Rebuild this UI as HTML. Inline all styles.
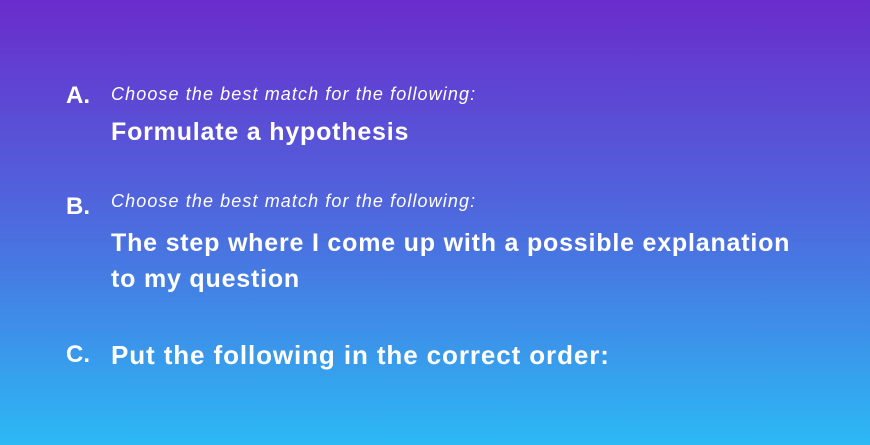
<!DOCTYPE html>
<html><head><style>
html,body{margin:0;padding:0}
body{width:870px;height:445px;overflow:hidden;background:linear-gradient(180deg,#6a2ccc 0%,#4d6ade 50%,#2cb9f4 100%);font-family:"Liberation Sans",sans-serif;color:#fff;position:relative}
.t{position:absolute;white-space:nowrap}
.L{font-weight:bold;font-size:24px}
.i{font-style:italic;font-size:18px;letter-spacing:1.1px}
.b{font-weight:bold;font-size:25px;letter-spacing:0.8px}
</style></head><body>
<div class="t L" style="left:66px;top:82px">A.</div>
<div class="t i" style="left:111px;top:84px">Choose the best match for the following:</div>
<div class="t b" style="left:111px;top:118px">Formulate a hypothesis</div>
<div class="t L" style="left:66px;top:193px">B.</div>
<div class="t i" style="left:111px;top:191px">Choose the best match for the following:</div>
<div class="t b" style="left:111px;top:229px">The step where I come up with a possible explanation</div>
<div class="t b" style="left:111px;top:265px">to my question</div>
<div class="t L" style="left:66px;top:341px">C.</div>
<div class="t b" style="left:111px;top:340px;font-size:26px;letter-spacing:0.9px">Put the following in the correct order:</div>
</body></html>
